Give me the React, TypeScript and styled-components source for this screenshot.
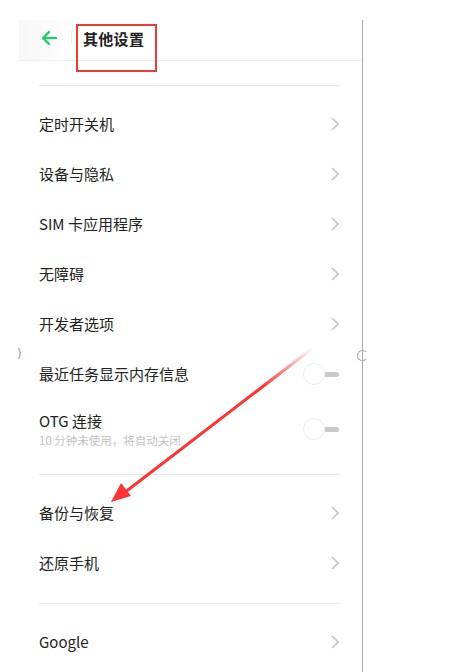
import React from "react";
import styled, { createGlobalStyle } from "styled-components";

const Global = createGlobalStyle`
  html, body { margin: 0; padding: 0; background: #fff; }
  body { font-family: "Noto Sans CJK SC", "Noto Sans", Roboto, sans-serif; color: #222; }
`;

const Page = styled.div`
  position: relative;
  width: 457px;
  height: 672px;
  overflow: hidden;
  background: #fff;
  display: flex;
  padding-top: 20px;
  box-sizing: border-box;
`;

const Panel = styled.div`
  margin-left: 19px;
  width: 343px;
  border-right: 1.5px solid #a9a9a9;
  display: flex;
  flex-direction: column;
  position: relative;
`;

const Header = styled.div`
  flex-shrink: 0;
  height: 41px;
  box-sizing: border-box;
  padding: 0 0 4px 21px;
  border-bottom: 1px solid #efefef;
  display: flex;
  align-items: center;
  background: linear-gradient(90deg, #f7f7f7 0%, #fff 60px);
`;

const Back = styled.span`
  display: flex;
  width: 18px;
  height: 18px;
  color: #2bc774;
`;

const Sep = styled.span`
  width: 1px;
  height: 14px;
  background: #eee;
  margin: 0 11px 0 13px;
`;

const Title = styled.h1`
  margin: 0;
  font-size: 15px;
  font-weight: 700;
  color: #222;
  letter-spacing: 0.3px;
`;

const Body = styled.div`
  flex-shrink: 0;
  padding: 24px 22px 0 20px;
  display: flex;
  flex-direction: column;
`;

const Group = styled.div`
  border-top: 1px solid #ebebeb;
  padding: 13px 0 15px;
  display: flex;
  flex-direction: column;
`;

const Row = styled.div<{ $tall?: boolean }>`
  height: ${(p) => (p.$tall ? 60 : 50)}px;
  display: flex;
  align-items: center;
  justify-content: space-between;
`;

const Texts = styled.div`
  display: flex;
  flex-direction: column;
  gap: 3px;
`;

const Label = styled.span`
  font-size: 15px;
  color: #222;
  line-height: 18px;
`;

const Sub = styled.span`
  font-size: 11.5px;
  color: #c2c2c2;
  line-height: 14px;
`;

const Chevron = styled.svg`
  width: 8px;
  height: 14px;
  margin-right: 1px;
`;

const Toggle = styled.div`
  display: flex;
  align-items: center;
  margin-right: 1px;
`;

const Knob = styled.span`
  width: 22px;
  height: 22px;
  border-radius: 50%;
  border: 1px solid #ececec;
  background: #fff;
  box-sizing: border-box;
`;

const Track = styled.span`
  width: 14px;
  height: 5px;
  border-radius: 0 3px 3px 0;
  background: #c9c9c9;
`;

const Notch = styled.span`
  position: absolute;
  right: -6px;
  top: 330px;
  width: 11px;
  height: 11px;
  border-radius: 50%;
  border: 1.5px solid #a9a9a9;
  border-right-color: transparent;
  box-sizing: border-box;
`;

const LeftMark = styled.span`
  position: absolute;
  left: 17px;
  top: 347px;
  font-size: 12px;
  color: #999;
  font-family: "DejaVu Sans", sans-serif;
`;

const Highlight = styled.div`
  position: absolute;
  left: 76px;
  top: 24px;
  width: 81px;
  height: 48px;
  border: 2px solid #f03a3a;
  box-sizing: border-box;
`;

const Overlay = styled.svg`
  position: absolute;
  left: 0;
  top: 0;
  pointer-events: none;
`;

const chevron = (
  <Chevron viewBox="0 0 8 14">
    <path d="M1 1 L7 7 L1 13" fill="none" stroke="#c4c4c4" strokeWidth="1.6" />
  </Chevron>
);

const toggle = (
  <Toggle>
    <Knob />
    <Track />
  </Toggle>
);

export default function App() {
  return (
    <>
      <Global />
      <Page>
        <Panel>
          <Header>
            <Back>
              <svg viewBox="0 0 18 18" width="18" height="18">
                <path d="M16 9 H3 M9 3 L3 9 L9 15" fill="none" stroke="currentColor" strokeWidth="2.4" strokeLinecap="round" strokeLinejoin="round" />
              </svg>
            </Back>
            <Sep />
            <Title>其他设置</Title>
          </Header>
          <Body>
            <Group>
              <Row><Label>定时开关机</Label>{chevron}</Row>
              <Row><Label>设备与隐私</Label>{chevron}</Row>
              <Row><Label>SIM 卡应用程序</Label>{chevron}</Row>
              <Row><Label>无障碍</Label>{chevron}</Row>
              <Row><Label>开发者选项</Label>{chevron}</Row>
              <Row><Label>最近任务显示内存信息</Label>{toggle}</Row>
              <Row $tall>
                <Texts>
                  <Label>OTG 连接</Label>
                  <Sub>10 分钟未使用，将自动关闭</Sub>
                </Texts>
                {toggle}
              </Row>
            </Group>
            <Group>
              <Row><Label>备份与恢复</Label>{chevron}</Row>
              <Row><Label>还原手机</Label>{chevron}</Row>
            </Group>
            <Group>
              <Row><Label>Google</Label>{chevron}</Row>
            </Group>
          </Body>
          <Notch />
        </Panel>
        <LeftMark>)</LeftMark>
        <Highlight />
        <Overlay width="457" height="672" viewBox="0 0 457 672">
          <defs>
            <linearGradient id="fade" x1="313" y1="348" x2="112" y2="502" gradientUnits="userSpaceOnUse">
              <stop offset="0" stopColor="#f33" stopOpacity="0" />
              <stop offset="0.25" stopColor="#f33" stopOpacity="1" />
              <stop offset="1" stopColor="#f33" stopOpacity="1" />
            </linearGradient>
          </defs>
          <line x1="313" y1="348" x2="124" y2="493" stroke="url(#fade)" strokeWidth="3" strokeLinecap="round" />
          <polygon points="111,502 121,483 131,496" fill="#f33" />
        </Overlay>
      </Page>
    </>
  );
}
